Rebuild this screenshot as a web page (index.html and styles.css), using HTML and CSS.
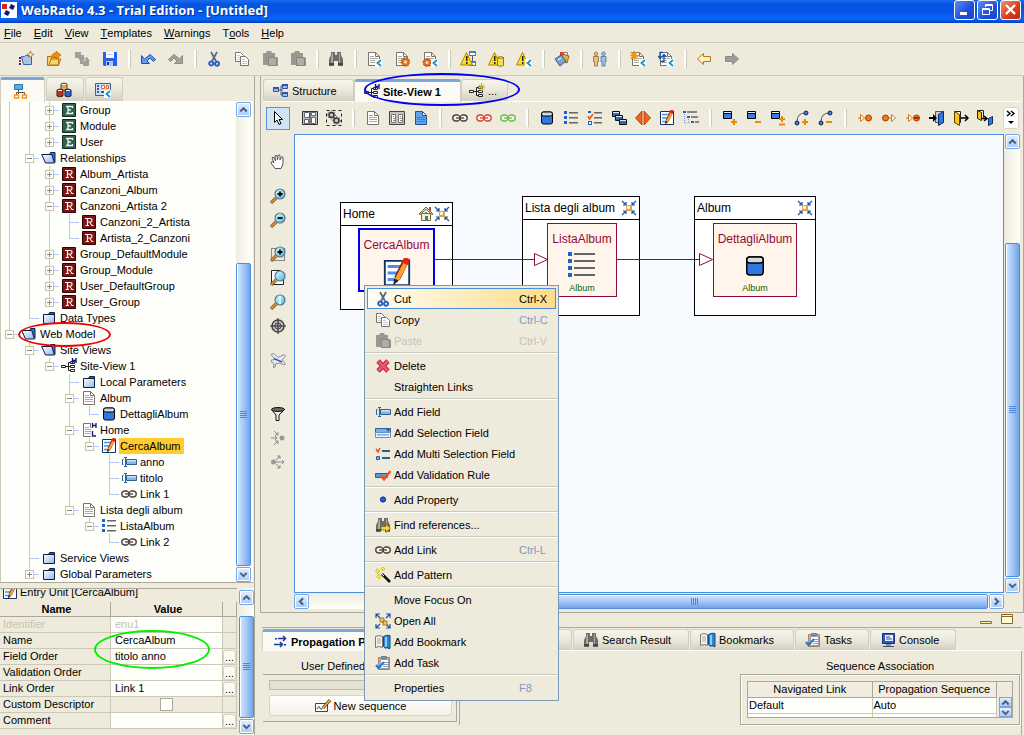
FILE: index.html
```html
<!DOCTYPE html>
<html lang="en">
<head>
<meta charset="utf-8">
<title>WebRatio 4.3 - Trial Edition - [Untitled]</title>
<link rel="stylesheet" href="styles.css">
</head>
<body>
<svg class="defs" aria-hidden="true">
  <defs>
    <linearGradient id="gf" x1="0" y1="0" x2="1" y2="1"><stop offset="0" stop-color="#fff"/><stop offset="1" stop-color="#8fb4ee"/></linearGradient>
    <linearGradient id="gl" x1="0" y1="0" x2="1" y2="1"><stop offset="0" stop-color="#e8fbff"/><stop offset="1" stop-color="#3fb4e4"/></linearGradient>
  </defs>
  <symbol id="logo" viewBox="0 0 16 16"><path fill="#fff" d="M0 0h16v16H0z"/><path fill="#e01c1c" d="M1 2h5v5H1z"/><path fill="#0d1a5c" d="M10 2l4 2-2 4-4-2zM5 8l4 2-2 4-4-2z"/></symbol>
  <symbol id="project" viewBox="0 0 16 16"><path fill="#a9c4e6" stroke="#3b659c" d="M3.500 5.500h3l1-1h3v1h3v8h-8z"/><path fill="#1b2f86" d="M1 6h2v2H1zM1 12h2v2H1z"/><path fill="#d22" d="M1 9h2v2H1z"/><path fill="#fff6c0" stroke="#b8862b" d="M12.500 0l1 2.500L16 3.500l-2.500 1-1 2.500-1-2.500L9 3.500l2.500-1z"/></symbol>
  <symbol id="open" viewBox="0 0 16 16"><path fill="#f7d56b" stroke="#b07a12" d="M1.500 14.500v-9h4l1 1h6v8zM3 14l2-6h10l-2.500 6z"/><path fill="#f08a12" stroke="#c25c00" stroke-width=".6" d="M5 8c0-4 2-6 5-6V0l5 4-5 4V6C8 6 6 6 5 8z"/></symbol>
  <symbol id="reload" viewBox="0 0 16 16"><path fill="#a09f9a" d="M1 1h6v3h3v3h2l-4 5-4-5H3V7H1zM15 15H9v-2H6v-3l3 1 3-2V6h1l3 4h-1z"/></symbol>
  <symbol id="save" viewBox="0 0 16 16"><path fill="#2460f4" d="M1 1h14v14H2l-1-1z"/><path fill="#fff" d="M4 1h8v6H4z"/><path fill="#b9c6ea" d="M5 3h6v1H5zM4 10h7v5H4z"/><path fill="#123aa0" d="M5 11h2v3H5z"/></symbol>
  <symbol id="undo" viewBox="0 0 16 16"><path fill="#5e9cf5" stroke="#1f4fb0" d="M1.500 4.500v8h8L7 10l3-3 3.500 3.500 2-2L10 3.500 4.500 8z"/></symbol>
  <symbol id="redo" viewBox="0 0 16 16"><path fill="#a4a39b" stroke="#8b8a84" d="M14.500 4.500v8h-8L9 10 6 7l-3.500 3.500-2-2L6 3.500 11.500 8z"/></symbol>
  <symbol id="cut" viewBox="0 0 16 16"><path fill="none" stroke="#5a6a86" stroke-width="1.800" d="M5 1l5 9M11 1L6 10"/><path fill="none" stroke="#2a62c4" stroke-width="2" d="M3.500 11.500a2 2 0 1 1 3 2.500 2 2 0 0 1-3-2.500zM9.500 11.500a2 2 0 1 1 0 2.500 2 2 0 0 1 0-2.500z"/></symbol>
  <symbol id="copy" viewBox="0 0 16 16"><path fill="#fff" stroke="#77736c" d="M1.500 1.500h5l3 3v6h-8z"/><path fill="none" stroke="#ccc" d="M3 4.500h3M3 6.500h3M3 8.500h3"/><path fill="#fff" stroke="#77736c" d="M6.500 5.500h5l3 3v6h-8z"/><path fill="none" stroke="#ccc" d="M8 8.500h3M8 10.500h5M8 12.500h5"/></symbol>
  <symbol id="paste" viewBox="0 0 16 16"><path fill="#989791" d="M1 2h3l1-2h4l1 2h3v4h2l1 1v8H6v-1H1z"/><path fill="#aeada6" stroke="#85847f" d="M6.500 6.500h6l2 2v6h-8z"/></symbol>
  <symbol id="binoc" viewBox="0 0 16 16"><path fill="#6c6c69" d="M3 1h4v3h2V1h4v3l2 4v7h-5v-5H6v5H1V8l2-4z"/><path fill="#aaa9a5" d="M4 2h1v10H3V8zM11 2h1v10h-1z"/><path fill="#444" d="M1 12h5v2H1zM10 12h5v2h-5z"/></symbol>
  <symbol id="page" viewBox="0 0 16 16"><path fill="#fff" stroke="#77746e" d="M2.500 1.500h7l4 4v9h-11z"/><path fill="none" stroke="#77746e" d="M9.500 1.500v4h4"/><path fill="none" stroke="#aaa7a0" d="M4 5.500h4M4 7.500h8M4 9.500h8M4 11.500h8"/></symbol>
  <symbol id="arrow-l" viewBox="0 0 16 16"><path fill="#fff" d="M9 8h7v8H9z"/><path fill="none" stroke="#1994c8" stroke-width="1.800" d="M15 9l-3.500 3 3.500 3"/></symbol>
  <symbol id="pg-arrow" viewBox="0 0 16 16"><use href="#page"/><use href="#arrow-l"/></symbol>
  <symbol id="pg-gear" viewBox="0 0 16 16"><use href="#page"/><circle cx="11.500" cy="11" r="3" fill="#f8d9b0" stroke="#e06a1a" stroke-width="2.400"/><circle cx="11.500" cy="11" r="4.400" fill="none" stroke="#9b4a12" stroke-dasharray="1.500 1.500"/></symbol>
  <symbol id="pg-gear2" viewBox="0 0 16 16"><use href="#page"/><circle cx="5" cy="11.500" r="2.800" fill="#f8d9b0" stroke="#e06a1a" stroke-width="2.400"/><circle cx="5" cy="11.500" r="4" fill="none" stroke="#9b4a12" stroke-dasharray="1.500 1.500"/><use href="#arrow-l"/></symbol>
  <symbol id="tri" viewBox="0 0 16 16"><path fill="#ffdc1e" stroke="#b08500" d="M6.500 1.500l6 12.500h-12z"/><path fill="#222" d="M6 5h1.500v5H6zM6 11h1.500v2H6z"/></symbol>
  <symbol id="warn1" viewBox="0 0 16 16"><path fill="#4c7fb8" d="M9 0h7v5H9zM9 10h7v5H9z"/><path fill="#fff" d="M10 2h5v2h-5zM10 12h5v2h-5z"/><path stroke="#555" d="M12.500 5v5"/><use href="#tri"/></symbol>
  <symbol id="warn2" viewBox="0 0 16 16"><use href="#tri"/><path fill="#f2e15a" stroke="#8d7a00" d="M9.500 6.500q3-2 6 0v8q-3 1.500-6 0zM9.500 6.500q3 2 6 0"/></symbol>
  <symbol id="warn3" viewBox="0 0 16 16"><use href="#tri"/><use href="#arrow-l"/></symbol>
  <symbol id="docs" viewBox="0 0 16 16"><path fill="#fff" stroke="#888" d="M7.500 1.500h6v9h-6z"/><path fill="#e33" d="M6 1h4v3H6z"/><path fill="#e7b13d" stroke="#9a6a10" d="M9 3l6 2-2 7-6-2z"/><path fill="#7fa3d0" stroke="#34578c" d="M1 8l6-4 5 6-6 5z"/><path stroke="#fff" d="M4 9l3-2"/></symbol>
  <symbol id="people" viewBox="0 0 16 16"><path fill="#e4c286" stroke="#8d6e39" stroke-width=".8" d="M4 1a1.800 1.800 0 1 1 0 3.600A1.800 1.800 0 0 1 4 1zM1.500 5.500h5v5h-1V15h-3v-4.500h-1z"/><path fill="#9fc0ea" stroke="#4c6c9c" stroke-width=".8" d="M11.500 1a1.800 1.800 0 1 1 0 3.600 1.800 1.800 0 0 1 0-3.600zM9 5.500h5v5h-1V15h-3v-4.500H9z"/></symbol>
  <symbol id="pg-new" viewBox="0 0 16 16"><use href="#page"/><path stroke="#f09a10" stroke-width="1.500" d="M4 0v9M0 4.500h9M1 1l6 7M7 1L1 8"/><use href="#arrow-l"/></symbol>
  <symbol id="pg-sync" viewBox="0 0 16 16"><use href="#page"/><path fill="none" stroke="#1c4cb0" stroke-width="1.300" d="M5 1.500h-3V7M0 5l2 2.500L4.500 5M2 10.500h4V4M4 6l2-2.500L8.500 6"/><use href="#arrow-l"/></symbol>
  <symbol id="back" viewBox="0 0 16 16"><path fill="#fff0b8" stroke="#b07a20" d="M1.500 8l6-5.500v3h7v5h-7v3z"/></symbol>
  <symbol id="fwd" viewBox="0 0 16 16"><path fill="#9c9c9c" stroke="#8a8a8a" d="M14.500 8l-6-5.500v3h-7v5h7v3z"/></symbol>
  <symbol id="t-tree" viewBox="0 0 16 16"><path fill="#51b0e6" stroke="#2b78ad" d="M1.500 1.500h8v5h-8z"/><path fill="none" stroke="#555" d="M5.500 7v4M3.500 12v-2.500h8V12"/><path fill="#fff" stroke="#f09a1a" stroke-width="1.400" d="M1.500 12h4v3h-4zM9.500 12h4v3h-4z"/></symbol>
  <symbol id="t-db" viewBox="0 0 16 16"><path fill="#e9a53c" stroke="#543" d="M5 2q3-2 6 0v6q-3 1.500-6 0z"/><path fill="#d22818" stroke="#421" d="M1 8q3-2 6 0v6q-3 1.500-6 0z"/><path fill="#2c62c8" stroke="#124" d="M9 8q3-2 6 0v6q-3 1.500-6 0z"/><path fill="none" stroke="#fff" d="M6 2.500h4M2 8.500h4M10 8.500h4"/></symbol>
  <symbol id="t-grid" viewBox="0 0 16 16"><path fill="#cfe0f5" stroke="#3a5f9a" d="M.5 1.500h15v12H.5z"/><path fill="#3a5f9a" d="M2 3h2v2H2zM2 6h2v2H2zM2 9h2v2H2z"/><path fill="#fff" stroke="#e06820" d="M6.500 3.500h3v3h-3zM11.500 3.500h2v3h-2z"/><path fill="#3a5f9a" d="M6 9h4v2H6z"/><use href="#arrow-l"/></symbol>
  <symbol id="struct" viewBox="0 0 16 16"><path fill="none" stroke="#555" d="M5 7h5M8 3v9h3M8 3h3"/><path fill="#9dbdf0" stroke="#2c56a8" d="M.5 4.500h5v4h-5zM9.500 1.500h5v4h-5zM9.500 9.500h5v4h-5z"/><path fill="#2c56a8" d="M0 4h6v2H0zM9 1h6v2H9zM9 9h6v2H9z"/></symbol>
  <symbol id="sv" viewBox="0 0 16 16"><path fill="none" stroke="#222" d="M4 8.500h3M10 4.500H7.500v8H10M7.500 8.500H10"/><path fill="#fff" stroke="#222" d="M.5 7.500h4v2h-4zM9.500 3.500h4v2h-4zM9.500 7.500h4v2h-4zM9.500 11.500h4v2h-4z"/></symbol>
  <symbol id="svh" viewBox="0 0 16 16"><use href="#sv"/><path fill="none" stroke="#15157c" stroke-width="1.400" d="M11.500 0v5M15 0v5M11 2.500h4"/></symbol>
  <symbol id="svn" viewBox="0 0 16 16"><use href="#sv"/><path stroke="#c5b400" d="M12.500 0v8M9 4h7M10 1.500l5 5M15 1.500l-5 5"/></symbol>
  <symbol id="pointer" viewBox="0 0 16 16"><path fill="#fff" stroke="#000" d="M4.500 1.500v11l2.500-2.500 2 4.500 2-1-2-4h3.500z"/></symbol>
  <symbol id="pages2" viewBox="0 0 16 16"><path fill="#c3c4be" stroke="#444" d="M.5 1.500h15v13H.5z"/><path fill="#fff" stroke="#777" d="M2.500 4.500h4v8h-4zM9.500 4.500h4v8h-4z"/><path stroke="#888" d="M4 6.500h1M4 8.500h2M4 10.500h2M11 6.500h1M11 8.500h2M11 10.500h2"/></symbol>
  <symbol id="area" viewBox="0 0 16 16"><path fill="#b9c4c4" stroke="#333" d="M.5 1.500h15v13H.5z"/><path fill="#fff" stroke="#667" d="M2.500 2.500h4l1 1v4h-5zM9.500 7.500h4v6h-4zM2.500 9.500h4v4h-4zM9.500 2.500h4v3h-4z"/><path stroke="#333" d="M8 1v13"/></symbol>
  <symbol id="gears" viewBox="0 0 16 16"><path fill="none" stroke="#222" stroke-dasharray="3 3" d="M.5.5h15v15H.5z"/><circle cx="5.500" cy="5" r="2.500" fill="#ccc" stroke="#333" stroke-width="1.500"/><circle cx="10.500" cy="10.500" r="2.500" fill="#ccc" stroke="#333" stroke-width="1.500"/><circle cx="10.500" cy="10.500" r="4" fill="none" stroke="#333" stroke-dasharray="1 2"/><circle cx="5.500" cy="5" r="4" fill="none" stroke="#333" stroke-dasharray="1 2"/></symbol>
  <symbol id="pgblue" viewBox="0 0 16 16"><path fill="#62a3ea" stroke="#22539a" d="M2.500 1.500h7l4 4v9h-11z"/><path fill="#fff" stroke="#22539a" d="M9.500 1.500v4h4z"/><path stroke="#3f7fce" d="M4 7.500h8M4 9.500h8M4 11.500h8"/></symbol>
  <symbol id="chain" viewBox="0 0 16 16"><path fill="#fff" fill-opacity=".5" stroke="currentColor" stroke-width="1.300" d="M3.500 5h2.500q2 1 2 3t-2 3H3.500Q.7 10.500.7 8t2.800-3zM10 5h2.500q2.800.5 2.800 3t-2.800 3H10q-2-1-2-3t2-3z"/><path stroke="currentColor" stroke-width="1.300" d="M4 8h8"/></symbol>
  <symbol id="cyl" viewBox="0 0 16 16"><path fill="#2f78e0" stroke="#000" d="M2.500 4q0-2 2-2h7q2 0 2 2v8q0 2-2 2h-7q-2 0-2-2z"/><path fill="#d6d9dc" stroke="#000" d="M2.500 4q0-2 2-2h7q2 0 2 2 0 2-2 2h-7q-2 0-2-2z"/></symbol>
  <symbol id="list" viewBox="0 0 16 16"><path fill="#1e62cc" d="M1 1h3v3H1zM1 6h3v3H1zM1 11h3v3H1z"/><path fill="#666" d="M6 2h9v1.500H6zM6 7h9v1.500H6zM6 12h9v1.500H6z"/></symbol>
  <symbol id="list4" viewBox="0 0 28 26"><path fill="#1e62cc" d="M0 0h4v4H0zM0 7h4v4H0zM0 14h4v4H0zM0 21h4v4H0z"/><path fill="#666" d="M6 1h21v2H6zM6 8h21v2H6zM6 15h21v2H6zM6 22h21v2H6z"/></symbol>
  <symbol id="mlist" viewBox="0 0 16 16"><path fill="#1e62cc" d="M1 1h3v2H1zM1 11h4v4H1z"/><path fill="#fff" d="M2 12h2v2H2z"/><path fill="none" stroke="#f05010" stroke-width="1.500" d="M1 6l1.500 3L6 4"/><path fill="#666" d="M7 2h8v1.500H7zM7 7h8v1.500H7zM7 12h8v1.500H7z"/></symbol>
  <symbol id="multi" viewBox="0 0 16 16"><path fill="#2f6cc4" stroke="#111" d="M1.500 1.500h7v5h-7zM4.500 5.500h7v5h-7zM8.500 9.500h7v5h-7z"/><path fill="#dfe8f5" d="M2 2h6v1H2zM5 6h6v1H5zM9 10h6v1H9z"/></symbol>
  <symbol id="scroll" viewBox="0 0 16 16"><path fill="#f0641c" stroke="#a03a08" stroke-width=".8" d="M7 1v14L.5 8zM9 1v14l6.500-7z"/></symbol>
  <symbol id="entry" viewBox="0 0 16 16"><path fill="#fff" stroke="#16335c" d="M1.500 1.500h13v13h-13z"/><path stroke="#4b8fe6" stroke-width="1.600" d="M3 4.500h7M3 8h7M3 11.500h5"/><path stroke="#6b3010" stroke-width="3.400" d="M12.500 2L8 11"/><path stroke="#ff9d2e" stroke-width="2.400" d="M12.500 3L8 11.500"/><path stroke="#f21b0c" stroke-width="3.200" d="M13.500 0L12 3"/><path fill="#222" d="M6.500 11l2.500 1-3 2.500z"/></symbol>
  <symbol id="hier" viewBox="0 0 16 16"><path fill="#1e62cc" d="M0 1h3v2H0zM4 6h3v2H4zM8 11h3v2H8z"/><path stroke="#666" stroke-width="1.500" d="M4 2h10M8 7h7M12 12h4"/><path fill="none" stroke="#6c93d8" stroke-dasharray="1 1" d="M1.500 4v9h2M5.500 9v4h2"/></symbol>
  <symbol id="cylS" viewBox="0 0 16 16"><path fill="#3a80e4" stroke="#000" d="M1.500 2.500h8v6h-8z"/><path fill="#f2f2f2" stroke="#000" d="M1.500 1.500h8v2h-8z"/></symbol>
  <symbol id="c-add" viewBox="0 0 16 16"><use href="#cylS"/><path stroke="#e68a10" stroke-width="2" d="M9 12h6M12 9v6"/></symbol>
  <symbol id="c-del" viewBox="0 0 16 16"><use href="#cylS"/><path stroke="#e68a10" stroke-width="2" d="M9 12h6"/></symbol>
  <symbol id="c-mod" viewBox="0 0 16 16"><use href="#cylS"/><path stroke="#e68a10" stroke-width="2" d="M9 9h6M12 6v6M9 14.500h6"/></symbol>
  <symbol id="arc" viewBox="0 0 16 16"><path fill="none" stroke="#555" d="M3 12Q3 3 11 3"/><circle cx="3" cy="13" r="2" fill="#3a80e4" stroke="#124"/><circle cx="12" cy="3" r="2" fill="#3a80e4" stroke="#124"/></symbol>
  <symbol id="r-add" viewBox="0 0 16 16"><use href="#arc"/><path stroke="#e68a10" stroke-width="2" d="M8 12h6M11 9v6"/></symbol>
  <symbol id="r-del" viewBox="0 0 16 16"><use href="#arc"/><path stroke="#e68a10" stroke-width="2" d="M8 12h6"/></symbol>
  <symbol id="ev1" viewBox="0 0 16 16"><path fill="#fff" stroke="#c8821c" d="M1 8h2M3.500 4.500v7L7.500 8z"/><circle cx="11.500" cy="8" r="3" fill="#f47a10" stroke="#a33c00"/></symbol>
  <symbol id="ev2" viewBox="0 0 16 16"><path fill="#fff" stroke="#c8821c" d="M7 8h4M10.500 4.500v7L14.500 8z"/><circle cx="4.500" cy="8" r="3" fill="#f47a10" stroke="#a33c00"/></symbol>
  <symbol id="ev3" viewBox="0 0 16 16"><use href="#ev1"/><path stroke="#700" stroke-width="1.400" d="M9.500 8h4"/></symbol>
  <symbol id="in" viewBox="0 0 16 16"><path fill="#ccc" stroke="#555" d="M6.500 1.500h8v11h-8z"/><path fill="#2f78e0" stroke="#0c2c66" d="M9.500 4.500l5-3v11l-5 3z"/><path fill="#000" d="M0 7h4V4l4 4-4 4V9H0z"/></symbol>
  <symbol id="out" viewBox="0 0 16 16"><path fill="#fff" stroke="#222" d="M1.500 1.500h6v11h-6z"/><path fill="#ffc414" stroke="#5b4200" d="M1.500 1.500l5 3v11l-5-3z"/><path fill="none" stroke="#000" stroke-width="1.500" d="M8 8h7M12 5l3 3-3 3"/></symbol>
  <symbol id="inout" viewBox="0 0 16 16"><path fill="#ffc414" stroke="#222" d="M.5.500l4 2v8l-4-2z"/><path fill="none" stroke="#222" d="M.5.500h6v7"/><path fill="#2f78e0" stroke="#0c2c66" d="M11.500 8.500l4-2v7l-4 2z"/><path fill="none" stroke="#000" stroke-width="1.500" d="M5 8.500h4M7 6l3 2.500L7 11"/></symbol>
  <symbol id="hand" viewBox="0 0 16 16"><path fill="#fff" stroke="#555" d="M5 14.500L1 9q0-2 2-1l1 1-2-5q1-2 2 0l1.500 3L5 2q1-2 2 0l.5 4L8 1.500q1-1.500 2 0L10 6l1.500-3q1.500-1 1.500 1v6l-2 4.500z"/></symbol>
  <symbol id="lens" viewBox="0 0 16 16"><path stroke="#8a5312" stroke-width="3.200" d="M1 15l5-5"/><path stroke="#e0983a" stroke-width="1.600" d="M1 15l5-5"/><circle cx="10" cy="6" r="5" fill="url(#gl)" stroke="#56778c" stroke-width="1.200"/></symbol>
  <symbol id="zin" viewBox="0 0 16 16"><use href="#lens"/><path stroke="#000" stroke-width="1.800" d="M7.500 6h5M10 3.500v5"/></symbol>
  <symbol id="zout" viewBox="0 0 16 16"><use href="#lens"/><path stroke="#000" stroke-width="1.800" d="M7.500 6h5"/></symbol>
  <symbol id="zsel" viewBox="0 0 16 16"><path fill="none" stroke="#222" stroke-dasharray="1 1" d="M1.500 2.500h13v12h-13z"/><use href="#zin"/></symbol>
  <symbol id="zpage" viewBox="0 0 16 16"><path fill="#fff" stroke="#222" d="M1.500.5h9l3 3v11h-12z"/><use href="#lens"/></symbol>
  <symbol id="zone" viewBox="0 0 16 16"><use href="#lens"/><path stroke="#fff" stroke-width="1.500" d="M10 2v8"/></symbol>
  <symbol id="target" viewBox="0 0 16 16"><circle cx="8" cy="8" r="6" fill="#ccc" stroke="#444" stroke-width="1.600"/><circle cx="8" cy="8" r="3.200" fill="#aaa" stroke="#444"/><path stroke="#333" d="M8 0v16M0 8h16"/></symbol>
  <symbol id="plane" viewBox="0 0 16 16"><path fill="#eceef2" stroke="#8a8a90" d="M1 2.500l3-1 4 4 6-3 1.500 1.500-3.500 4 3.500 4-1.500 1-4-2-4 .5-1 3.500-1.500.5.500-4-3-2 .5-1.500 4-.5z"/><path stroke="#2f5fd0" stroke-width="1.600" d="M4 6.500l8 3.500"/></symbol>
  <symbol id="funnel" viewBox="0 0 16 16"><path fill="#eee" stroke="#111" d="M1.500 3.500L6 9v5.500h3V9l5.500-5.500z"/><ellipse cx="8" cy="3.500" rx="6.500" ry="2" fill="#666" stroke="#111"/></symbol>
  <symbol id="conv" viewBox="0 0 16 16"><circle cx="12" cy="8" r="2.500" fill="#999"/><path fill="none" stroke="#888" d="M1 8h6M5 6l2 2-2 2M4 1l4 4M8 2v3H5M4 15l4-4M8 14v-3H5"/></symbol>
  <symbol id="div" viewBox="0 0 16 16"><circle cx="3.500" cy="8" r="2.500" fill="#999"/><path fill="none" stroke="#888" d="M6 8h8M12 6l2 2-2 2M6 6l4-4M7 2h3v3M6 10l4 4M7 14h3v-3"/></symbol>
  <symbol id="folder" viewBox="0 0 16 16"><path fill="#2c62b4" stroke="#0c2350" d="M7.500 4.500l1-2h5v3"/><path fill="url(#gf)" stroke="#0c1d40" d="M2.500 4.500h11v9h-11z"/></symbol>
  <symbol id="folderO" viewBox="0 0 16 16"><path fill="#2c72d4" stroke="#0c2350" d="M6.500 4.500h2l1-2h4.500v10"/><path fill="url(#gf)" stroke="#0c1d40" d="M.7 4.500h10l2.800 8.500h-9z"/></symbol>
  <symbol id="pagehl" viewBox="0 0 16 16"><use href="#page"/><path fill="#fdfdfa" d="M10 0h6v16h-6z"/><path fill="none" stroke="#15157c" stroke-width="1.300" d="M11.500 1v5M15 1v5M11 3.500h4M11.500 9v5H15"/></symbol>
  <symbol id="field" viewBox="0 0 16 16"><path fill="#86b5e6" stroke="#2c6098" d="M5.500 5.500h10v5h-10z"/><path fill="#cfe3f8" d="M6 6h9v1.500H6z"/><path fill="none" stroke="#2c6098" d="M4.500 4v8M3 3.500h3M3 12.500h3M2.500 5.500h-1v5h1"/></symbol>
  <symbol id="select" viewBox="0 0 16 16"><path fill="#7eaee4" stroke="#2c6098" d="M.5 3.500h15v4H.5z"/><path fill="#e8f2fc" stroke="#5f93cc" d="M.5 7.500h15v5H.5z"/><path fill="#2c6098" d="M11 4h4L13 7z"/><path fill="#7eaee4" d="M2 9h12v1.500H2z"/></symbol>
  <symbol id="mfield" viewBox="0 0 16 16"><path fill="none" stroke="#f04a10" stroke-width="1.500" d="M1 3l2 3 2-4"/><path fill="#7eaee4" stroke="#2c6098" d="M7 4.500h8M7 5.500h8M7 11.500h8M7 12.500h8M1.500 10.500h3v3h-3z"/></symbol>
  <symbol id="valid" viewBox="0 0 16 16"><path fill="#5f98d8" stroke="#2c6098" d="M.5 6.500h12v4H.5z"/><path fill="none" stroke="#f5500c" stroke-width="2.200" d="M6 9l3 3.500L15.500 4"/></symbol>
  <symbol id="dot" viewBox="0 0 16 16"><circle cx="8" cy="7.500" r="2.600" fill="#1c5ff0" stroke="#0a2280"/></symbol>
  <symbol id="find" viewBox="0 0 16 16"><use href="#binoc"/><path fill="#ffd23e" stroke="#8a6400" stroke-width=".8" d="M6 9.500h5V7l4.500 4.200L11 15.500V13H6z"/></symbol>
  <symbol id="wand" viewBox="0 0 16 16"><path stroke="#111" stroke-width="2.600" d="M7 7l8 8"/><path stroke="#fff" d="M7 7l2 2"/><path fill="#ffec1c" stroke="#c2a800" stroke-width=".6" d="M2.500 1.500l2 2.500-2 2.500-2-2.500zM8 0l2 2-2 2-2-2zM4 7l2 2.500L4 12 2 9.500z"/></symbol>
  <symbol id="expand" viewBox="0 0 16 16"><path fill="none" stroke="#1f4fb0" stroke-width="1.200" d="M1 5V1h4M11 1h4v4M15 11v4h-4M5 15H1v-4M1 1l4 4M15 1l-4 4M15 15l-4-4M1 15l4-4"/><path fill="#f0c35c" stroke="#8a6a20" stroke-width=".8" d="M5 5h4v4H5zM8 8h4v4H8z"/></symbol>
  <symbol id="shrink" viewBox="0 0 16 16"><path fill="none" stroke="#1f4fb0" stroke-width="1.200" d="M1 1l4 4M2 5h3V2M15 1l-4 4M11 2v3h3M1 15l4-4M2 11h3v3M15 15l-4-4M14 11h-3v3"/><path fill="#d9a840" d="M5 5h6v6H5z"/><path fill="#fff3c0" d="M6 6h3v3H6z"/></symbol>
  <symbol id="home" viewBox="0 0 16 16"><path fill="#fbf2c4" stroke="#7b6a3a" d="M3.500 7.500h9v7h-9z"/><path fill="#d8dcc0" stroke="#6b6b4b" d="M1 8l7-7 7 7-1 .5-6-5-6 5z"/><path fill="#b44" d="M11 1h2v4h-2z"/><path fill="#3c77b8" d="M7 10h3v5H7z"/><path fill="#3c9a4a" d="M7 6h2v2H7z"/></symbol>
  <symbol id="book" viewBox="0 0 16 16"><path fill="#f6f2e4" stroke="#777" d="M.5 2.500Q4 .5 7.500 2.500v11Q4 11.500.5 13.500z"/><path stroke="#aaa" d="M2 5h4M2 7h4M2 9h4"/><path fill="#2c86d8" stroke="#0d4a8a" d="M8.500 2.500q3-2 6.500-1v13h-2l-1-2-1 2-2.500-2z"/><path fill="#8ecbf8" d="M10 3h2v10h-2z"/></symbol>
  <symbol id="task" viewBox="0 0 16 16"><path fill="#d7b088" stroke="#a9825a" d="M3.500 2.500h11v12h-11z"/><path fill="#fff" stroke="#99a" d="M5.500 4.500h8v9h-8z"/><path fill="#7fa6d6" stroke="#678" d="M6.500 1.500h5v2h-5z"/><path stroke="#99a" d="M9 7.500h4M8 9.500h5M8 11.500h5"/><path fill="none" stroke="#1b7fd8" stroke-width="2.200" d="M1 10l2.500 3L9 7"/></symbol>
  <symbol id="console" viewBox="0 0 16 16"><path fill="#3458c0" stroke="#1b2c78" d="M2.500 1.500h12v10h-12z"/><path fill="#e8eefc" d="M5 3h8v6H5z"/><path stroke="#456" d="M6 5h4M6 7h6M3 14.500h11"/><path fill="#7c8fc0" d="M6 12h5v2H6z"/></symbol>
  <symbol id="prop" viewBox="0 0 16 16"><path fill="none" stroke="#1c3c9c" stroke-width="1.500" d="M6 4.500h7M11 2l2.500 2.500L11 7M2 10.500h8M8 8l2.500 2.500L8 13"/><path fill="#1c3c9c" d="M3 4h2v1.500H3zM12 10h2v1.500h-2z"/></symbol>
  <symbol id="del" viewBox="0 0 16 16"><path stroke="#b81c38" stroke-width="4.600" d="M3 3l10 10M13 3L3 13"/><path stroke="#f0546c" stroke-width="3" d="M3 3l10 10M13 3L3 13"/></symbol>
  <symbol id="e" viewBox="0 0 16 16"><path fill="#356250" stroke="#0e2a20" d="M1.500 1.500h13v13h-13z"/><path fill="none" stroke="#e8f4ee" stroke-width="1.300" d="M5 4.500h6.500V6M7 4v8M5 11.500h6.500V10M7 8h3"/></symbol>
  <symbol id="r" viewBox="0 0 16 16"><path fill="#7c1414" stroke="#2a0404" d="M1.500 1.500h13v13h-13z"/><path fill="none" stroke="#fff0f0" stroke-width="1.200" d="M4 4.500h5q2 0 2 1.800t-2 1.700H6.500M6.500 4v8M4.500 11.500h3.500M8.500 8l2.500 3.500h1.500"/></symbol>
  <symbol id="up" viewBox="0 0 16 16"><path fill="none" stroke="#4d6185" stroke-width="2.600" d="M4 10.500l4-4 4 4"/></symbol>
  <symbol id="down" viewBox="0 0 16 16"><path fill="none" stroke="#4d6185" stroke-width="2.600" d="M4 6l4 4 4-4"/></symbol>
  <symbol id="left" viewBox="0 0 16 16"><path fill="none" stroke="#4d6185" stroke-width="2.600" d="M10 4L6 8l4 4"/></symbol>
  <symbol id="right" viewBox="0 0 16 16"><path fill="none" stroke="#4d6185" stroke-width="2.600" d="M6 4l4 4-4 4"/></symbol>
  <symbol id="wmin" viewBox="0 0 20 20"><path fill="#fff" d="M5 12h7v3H5z"/></symbol>
  <symbol id="wres" viewBox="0 0 20 20"><path fill="none" stroke="#fff" d="M7.500 7V4.500h7v6H12M7 5.500h8M4.500 8.500h7v6h-7zM4 9.500h8"/></symbol>
  <symbol id="wclose" viewBox="0 0 20 20"><path stroke="#fff" stroke-width="2.400" d="M5 5l9 9M14 5l-9 9"/></symbol>
  <symbol id="more" viewBox="0 0 16 24"><path fill="none" stroke="#000" stroke-width="1.400" d="M4 5l3 2.500L4 10M8 5l3 2.500L8 10"/><path fill="#000" d="M5 15h6l-3 3z"/></symbol>
  <symbol id="pmin" viewBox="0 0 14 12"><path fill="#fff3b0" stroke="#8a6a20" d="M1.500 8.500h11v2h-11z"/></symbol>
  <symbol id="pmax" viewBox="0 0 14 12"><path fill="#fffad8" stroke="#8a6a20" d="M1.500 1.500h11v9h-11zM1 3.500h12"/></symbol>
  <symbol id="seq" viewBox="0 0 16 16"><path fill="#fff" stroke="#444" d="M.5 5.500h12v8H.5z"/><path fill="none" stroke="#333" d="M2 11q2-4 3-1t3-1"/><path stroke="#5b3b10" stroke-width="3" d="M15 2l-7 8"/><path stroke="#f2b848" stroke-width="1.500" d="M15 2l-7 8"/></symbol>
</svg>

<header class="titlebar">
  <svg class="ic"><use href="#logo"/></svg>
  <h1>WebRatio 4.3 - Trial Edition - [Untitled]</h1>
  <div class="winbtns">
    <button aria-label="Minimize"><svg><use href="#wmin"/></svg></button>
    <button aria-label="Restore"><svg><use href="#wres"/></svg></button>
    <button class="close" aria-label="Close"><svg><use href="#wclose"/></svg></button>
  </div>
</header>

<nav class="menubar">
  <button><u>F</u>ile</button><button><u>E</u>dit</button><button><u>V</u>iew</button><button><u>T</u>emplates</button><button><u>W</u>arnings</button><button>T<u>o</u>ols</button><button><u>H</u>elp</button>
</nav>

<div class="toolbar main-tools">
  <button aria-label="New"><svg class="ic"><use href="#project"/></svg></button>
  <button aria-label="Open"><svg class="ic"><use href="#open"/></svg></button>
  <button aria-label="Reload"><svg class="ic"><use href="#reload"/></svg></button>
  <button aria-label="Save"><svg class="ic"><use href="#save"/></svg></button>
  <i class="sep"></i>
  <button aria-label="Undo"><svg class="ic"><use href="#undo"/></svg></button>
  <button aria-label="Redo"><svg class="ic"><use href="#redo"/></svg></button>
  <i class="sep"></i>
  <button aria-label="Cut"><svg class="ic"><use href="#cut"/></svg></button>
  <button aria-label="Copy"><svg class="ic"><use href="#copy"/></svg></button>
  <button aria-label="Paste"><svg class="ic"><use href="#paste"/></svg></button>
  <button aria-label="Paste special"><svg class="ic"><use href="#paste"/></svg></button>
  <i class="sep"></i>
  <button aria-label="Find"><svg class="ic"><use href="#binoc"/></svg></button>
  <i class="sep"></i>
  <button aria-label="Generate page"><svg class="ic"><use href="#pg-arrow"/></svg></button>
  <button aria-label="Page settings"><svg class="ic"><use href="#pg-gear"/></svg></button>
  <button aria-label="Generate settings"><svg class="ic"><use href="#pg-gear2"/></svg></button>
  <i class="sep"></i>
  <button aria-label="Model warnings"><svg class="ic"><use href="#warn1"/></svg></button>
  <button aria-label="Data warnings"><svg class="ic"><use href="#warn2"/></svg></button>
  <button aria-label="Presentation warnings"><svg class="ic"><use href="#warn3"/></svg></button>
  <i class="sep"></i>
  <button aria-label="Documentation"><svg class="ic"><use href="#docs"/></svg></button>
  <i class="sep"></i>
  <button aria-label="Users"><svg class="ic"><use href="#people"/></svg></button>
  <i class="sep"></i>
  <button aria-label="New template"><svg class="ic"><use href="#pg-new"/></svg></button>
  <button aria-label="Sync template"><svg class="ic"><use href="#pg-sync"/></svg></button>
  <i class="sep"></i>
  <button aria-label="Back"><svg class="ic"><use href="#back"/></svg></button>
  <button aria-label="Forward"><svg class="ic"><use href="#fwd"/></svg></button>
</div>

<main class="work">
  <aside class="side">
    <div class="tabs side-tabs">
      <button class="tab on" aria-label="Model tree"><svg class="ic"><use href="#t-tree"/></svg></button>
      <button class="tab" aria-label="Data"><svg class="ic"><use href="#t-db"/></svg></button>
      <button class="tab" aria-label="Presentation"><svg class="ic"><use href="#t-grid"/></svg></button>
    </div>
    <section class="tree-panel">
      <ul class="tree">
        <li class="bare"><ul>
          <li class="bare"><ul>
            <li><div class="row"><button class="tog plus" aria-label="Expand"></button><svg class="ic"><use href="#e"/></svg><span>Group</span></div></li>
            <li><div class="row"><button class="tog plus" aria-label="Expand"></button><svg class="ic"><use href="#e"/></svg><span>Module</span></div></li>
            <li><div class="row"><button class="tog plus" aria-label="Expand"></button><svg class="ic"><use href="#e"/></svg><span>User</span></div></li>
          </ul></li>
          <li><div class="row"><button class="tog" aria-label="Collapse"></button><svg class="ic"><use href="#folderO"/></svg><span>Relationships</span></div>
            <ul>
              <li><div class="row"><button class="tog plus" aria-label="Expand"></button><svg class="ic"><use href="#r"/></svg><span>Album_Artista</span></div></li>
              <li><div class="row"><button class="tog plus" aria-label="Expand"></button><svg class="ic"><use href="#r"/></svg><span>Canzoni_Album</span></div></li>
              <li><div class="row"><button class="tog" aria-label="Collapse"></button><svg class="ic"><use href="#r"/></svg><span>Canzoni_Artista 2</span></div>
                <ul>
                  <li><div class="row leaf"><svg class="ic"><use href="#r"/></svg><span>Canzoni_2_Artista</span></div></li>
                  <li><div class="row leaf"><svg class="ic"><use href="#r"/></svg><span>Artista_2_Canzoni</span></div></li>
                </ul></li>
              <li><div class="row"><button class="tog plus" aria-label="Expand"></button><svg class="ic"><use href="#r"/></svg><span>Group_DefaultModule</span></div></li>
              <li><div class="row"><button class="tog plus" aria-label="Expand"></button><svg class="ic"><use href="#r"/></svg><span>Group_Module</span></div></li>
              <li><div class="row"><button class="tog plus" aria-label="Expand"></button><svg class="ic"><use href="#r"/></svg><span>User_DefaultGroup</span></div></li>
              <li><div class="row"><button class="tog plus" aria-label="Expand"></button><svg class="ic"><use href="#r"/></svg><span>User_Group</span></div></li>
            </ul></li>
          <li><div class="row leaf"><svg class="ic"><use href="#folder"/></svg><span>Data Types</span></div></li>
        </ul></li>
        <li><div class="row"><button class="tog" aria-label="Collapse"></button><svg class="ic"><use href="#folderO"/></svg><span>Web Model</span></div>
          <ul>
            <li><div class="row"><button class="tog" aria-label="Collapse"></button><svg class="ic"><use href="#folderO"/></svg><span>Site Views</span></div>
              <ul>
                <li><div class="row"><button class="tog" aria-label="Collapse"></button><svg class="ic"><use href="#svh"/></svg><span>Site-View 1</span></div>
                  <ul>
                    <li><div class="row leaf"><svg class="ic"><use href="#folder"/></svg><span>Local Parameters</span></div></li>
                    <li><div class="row"><button class="tog" aria-label="Collapse"></button><svg class="ic"><use href="#page"/></svg><span>Album</span></div>
                      <ul><li><div class="row leaf"><svg class="ic"><use href="#cyl"/></svg><span>DettagliAlbum</span></div></li></ul></li>
                    <li><div class="row"><button class="tog" aria-label="Collapse"></button><svg class="ic"><use href="#pagehl"/></svg><span>Home</span></div>
                      <ul><li><div class="row"><button class="tog" aria-label="Collapse"></button><svg class="ic"><use href="#entry"/></svg><span class="picked">CercaAlbum</span></div>
                        <ul>
                          <li><div class="row leaf"><svg class="ic"><use href="#field"/></svg><span>anno</span></div></li>
                          <li><div class="row leaf"><svg class="ic"><use href="#field"/></svg><span>titolo</span></div></li>
                          <li><div class="row leaf"><svg class="ic chain"><use href="#chain"/></svg><span>Link 1</span></div></li>
                        </ul></li></ul></li>
                    <li><div class="row"><button class="tog" aria-label="Collapse"></button><svg class="ic"><use href="#page"/></svg><span>Lista degli album</span></div>
                      <ul><li><div class="row"><button class="tog" aria-label="Collapse"></button><svg class="ic"><use href="#list"/></svg><span>ListaAlbum</span></div>
                        <ul><li><div class="row leaf"><svg class="ic chain"><use href="#chain"/></svg><span>Link 2</span></div></li></ul></li></ul></li>
                  </ul></li>
              </ul></li>
            <li><div class="row leaf"><svg class="ic"><use href="#folder"/></svg><span>Service Views</span></div></li>
            <li><div class="row"><button class="tog plus" aria-label="Expand"></button><svg class="ic"><use href="#folder"/></svg><span>Global Parameters</span></div></li>
          </ul></li>
      </ul>
      <div class="sb sb-tree"><button aria-label="Scroll up"><svg><use href="#up"/></svg></button><i class="track"></i><i class="thumb"></i><button aria-label="Scroll down"><svg><use href="#down"/></svg></button></div>
    </section>

    <section class="props">
      <div class="props-body">
        <div class="props-title"><svg class="ic"><use href="#entry"/></svg><span>Entry Unit [CercaAlbum]</span></div>
        <table class="ptable">
          <thead><tr><th class="pn">Name</th><th class="pv">Value</th><th></th></tr></thead>
          <tbody>
            <tr class="off"><td>Identifier</td><td class="val">enu1</td><td></td></tr>
            <tr><td>Name</td><td class="val">CercaAlbum</td><td></td></tr>
            <tr><td>Field Order</td><td class="val">titolo anno</td><td><button class="dots">...</button></td></tr>
            <tr><td>Validation Order</td><td class="val"></td><td><button class="dots">...</button></td></tr>
            <tr><td>Link Order</td><td class="val">Link 1</td><td><button class="dots">...</button></td></tr>
            <tr><td><label for="cd">Custom Descriptor</label></td><td class="chk"><input type="checkbox" id="cd"></td><td></td></tr>
            <tr><td>Comment</td><td class="val"></td><td><button class="dots">...</button></td></tr>
          </tbody>
        </table>
      </div>
      <div class="sb sb-props"><button aria-label="Scroll up"><svg><use href="#up"/></svg></button><i class="track"></i><i class="thumb"></i><button aria-label="Scroll down"><svg><use href="#down"/></svg></button></div>
    </section>
  </aside>

  <div class="editor-col">
    <section class="editor">
      <div class="tabs">
        <button class="tab t-struct"><svg class="ic"><use href="#struct"/></svg>Structure</button>
        <button class="tab on t-site"><svg class="ic"><use href="#svh"/></svg>Site-View 1</button>
        <button class="tab t-new"><svg class="ic"><use href="#svn"/></svg>...</button>
      </div>
      <div class="toolbar unit-tools">
        <button class="sel" aria-label="Select"><svg class="ic"><use href="#pointer"/></svg></button>
        <i class="gap"></i>
        <button aria-label="Area"><svg class="ic"><use href="#area"/></svg></button>
        <button aria-label="Transaction"><svg class="ic"><use href="#gears"/></svg></button>
        <i class="sep"></i>
        <button aria-label="Page"><svg class="ic"><use href="#page"/></svg></button>
        <button aria-label="Alternative"><svg class="ic"><use href="#pages2"/></svg></button>
        <button aria-label="Master page"><svg class="ic"><use href="#pgblue"/></svg></button>
        <i class="sep"></i>
        <button class="chain" aria-label="Link"><svg class="ic"><use href="#chain"/></svg></button>
        <button class="chain ko" aria-label="KO link"><svg class="ic"><use href="#chain"/></svg></button>
        <button class="chain ok" aria-label="OK link"><svg class="ic"><use href="#chain"/></svg></button>
        <i class="sep"></i>
        <button aria-label="Data unit"><svg class="ic"><use href="#cyl"/></svg></button>
        <button aria-label="Index unit"><svg class="ic"><use href="#list"/></svg></button>
        <button aria-label="Multichoice unit"><svg class="ic"><use href="#mlist"/></svg></button>
        <button aria-label="Multidata unit"><svg class="ic"><use href="#multi"/></svg></button>
        <button aria-label="Scroller unit"><svg class="ic"><use href="#scroll"/></svg></button>
        <button aria-label="Entry unit"><svg class="ic"><use href="#entry"/></svg></button>
        <button aria-label="Hierarchical index"><svg class="ic"><use href="#hier"/></svg></button>
        <i class="sep"></i>
        <button aria-label="Create unit"><svg class="ic"><use href="#c-add"/></svg></button>
        <button aria-label="Delete unit"><svg class="ic"><use href="#c-del"/></svg></button>
        <button aria-label="Modify unit"><svg class="ic"><use href="#c-mod"/></svg></button>
        <button aria-label="Connect unit"><svg class="ic"><use href="#r-add"/></svg></button>
        <button aria-label="Disconnect unit"><svg class="ic"><use href="#r-del"/></svg></button>
        <i class="sep"></i>
        <button aria-label="Get unit"><svg class="ic"><use href="#ev1"/></svg></button>
        <button aria-label="Set unit"><svg class="ic"><use href="#ev2"/></svg></button>
        <button aria-label="Reset unit"><svg class="ic"><use href="#ev3"/></svg></button>
        <button aria-label="Login"><svg class="ic"><use href="#in"/></svg></button>
        <button aria-label="Logout"><svg class="ic"><use href="#out"/></svg></button>
        <button aria-label="Change group"><svg class="ic"><use href="#inout"/></svg></button>
        <button class="more" aria-label="More"><svg><use href="#more"/></svg></button>
      </div>
      <div class="stage">
        <div class="vtools">
          <button aria-label="Pan"><svg class="ic"><use href="#hand"/></svg></button>
          <i class="vgap"></i>
          <button aria-label="Zoom in"><svg class="ic"><use href="#zin"/></svg></button>
          <button aria-label="Zoom out"><svg class="ic"><use href="#zout"/></svg></button>
          <i class="vgap"></i>
          <button aria-label="Zoom selection"><svg class="ic"><use href="#zsel"/></svg></button>
          <button aria-label="Zoom page"><svg class="ic"><use href="#zpage"/></svg></button>
          <button aria-label="Actual size"><svg class="ic"><use href="#zone"/></svg></button>
          <button aria-label="Center"><svg class="ic"><use href="#target"/></svg></button>
          <i class="vgap"></i>
          <button aria-label="Overview"><svg class="ic"><use href="#plane"/></svg></button>
          <i class="vgap"></i><i class="vgap"></i><i class="vgap"></i>
          <button aria-label="Filter"><svg class="ic"><use href="#funnel"/></svg></button>
          <button aria-label="Incoming links"><svg class="ic"><use href="#conv"/></svg></button>
          <button aria-label="Outgoing links"><svg class="ic"><use href="#div"/></svg></button>
        </div>
        <div class="canvas">
          <article class="node n-home"><h2><span>Home</span><svg class="ic"><use href="#home"/></svg><svg class="ic"><use href="#shrink"/></svg></h2>
            <div class="unit active"><b>CercaAlbum</b><svg class="u-entry"><use href="#entry"/></svg></div></article>
          <article class="node n-list"><h2><span>Lista degli album</span><svg class="ic"><use href="#shrink"/></svg></h2>
            <div class="unit"><b>ListaAlbum</b><svg class="u-list"><use href="#list4"/></svg><small>Album</small></div></article>
          <article class="node n-album"><h2><span>Album</span><svg class="ic"><use href="#shrink"/></svg></h2>
            <div class="unit"><b>DettagliAlbum</b><svg class="u-cyl"><use href="#cyl"/></svg><small>Album</small></div></article>
          <svg class="links" fill="none" stroke="#8f0a3c"><path d="M140 124.500h99M239.500 118.500v12l13-6zM322 124.500h82M404.500 118.500v12l13-6z"/></svg>
        </div>
        <div class="sb sb-v"><button aria-label="Scroll up"><svg><use href="#up"/></svg></button><i class="track"></i><i class="thumb"></i><button aria-label="Scroll down"><svg><use href="#down"/></svg></button></div>
        <div class="sb sb-h"><button aria-label="Scroll left"><svg><use href="#left"/></svg></button><i class="track"></i><i class="thumb"></i><button aria-label="Scroll right"><svg><use href="#right"/></svg></button></div>
      </div>
    </section>

    <section class="bottom">
      <div class="panebtns"><button aria-label="Minimize pane"><svg><use href="#pmin"/></svg></button><button aria-label="Maximize pane"><svg><use href="#pmax"/></svg></button></div>
      <div class="tabs">
        <button class="tab on t-prop"><svg class="ic"><use href="#prop"/></svg>Propagation Panel</button>
        <button class="tab t-hid" aria-label="Problems"></button>
        <button class="tab t-search"><svg class="ic"><use href="#binoc"/></svg>Search Result</button>
        <button class="tab t-book"><svg class="ic"><use href="#book"/></svg>Bookmarks</button>
        <button class="tab t-task"><svg class="ic"><use href="#task"/></svg>Tasks</button>
        <button class="tab t-cons"><svg class="ic"><use href="#console"/></svg>Console</button>
      </div>
      <div class="bottom-body">
        <div class="seqs">
          <h3>User Defined</h3>
          <div class="seqbox"><div class="seqlist"></div><button class="newseq"><svg class="ic"><use href="#seq"/></svg>New sequence</button></div>
        </div>
        <div class="assoc">
          <h3>Sequence Association</h3>
          <div class="frame"><div class="frame-in">
            <table class="atable"><thead><tr><th>Navigated Link</th><th>Propagation Sequence</th></tr></thead>
              <tbody><tr><td>Default</td><td>Auto</td></tr><tr><td></td><td></td></tr></tbody></table>
            <div class="spin"><button aria-label="Up"><svg><use href="#up"/></svg></button><button aria-label="Down"><svg><use href="#down"/></svg></button></div>
          </div></div>
        </div>
      </div>
    </section>
  </div>
</main>

<menu class="ctx">
  <li><button class="hot"><svg class="ic"><use href="#cut"/></svg><span>Cut</span><kbd>Ctrl-X</kbd></button></li>
  <li><button><svg class="ic"><use href="#copy"/></svg><span>Copy</span><kbd>Ctrl-C</kbd></button></li>
  <li><button disabled><svg class="ic"><use href="#paste"/></svg><span>Paste</span><kbd>Ctrl-V</kbd></button></li>
  <li class="line"></li>
  <li><button><svg class="ic"><use href="#del"/></svg><span>Delete</span></button></li>
  <li><button><i class="ic"></i><span>Straighten Links</span></button></li>
  <li class="line"></li>
  <li><button><svg class="ic"><use href="#field"/></svg><span>Add Field</span></button></li>
  <li><button><svg class="ic"><use href="#select"/></svg><span>Add Selection Field</span></button></li>
  <li><button><svg class="ic"><use href="#mfield"/></svg><span>Add Multi Selection Field</span></button></li>
  <li><button><svg class="ic"><use href="#valid"/></svg><span>Add Validation Rule</span></button></li>
  <li class="line"></li>
  <li><button><svg class="ic"><use href="#dot"/></svg><span>Add Property</span></button></li>
  <li class="line"></li>
  <li><button><svg class="ic"><use href="#find"/></svg><span>Find references...</span></button></li>
  <li class="line"></li>
  <li><button><svg class="ic chain"><use href="#chain"/></svg><span>Add Link</span><kbd>Ctrl-L</kbd></button></li>
  <li class="line"></li>
  <li><button><svg class="ic"><use href="#wand"/></svg><span>Add Pattern</span></button></li>
  <li class="line"></li>
  <li><button><i class="ic"></i><span>Move Focus On</span></button></li>
  <li><button><svg class="ic"><use href="#expand"/></svg><span>Open All</span></button></li>
  <li><button><svg class="ic"><use href="#book"/></svg><span>Add Bookmark</span></button></li>
  <li><button><svg class="ic"><use href="#task"/></svg><span>Add Task</span></button></li>
  <li class="line"></li>
  <li><button><i class="ic"></i><span>Properties</span><kbd>F8</kbd></button></li>
</menu>

<div class="mark m-blue"></div>
<div class="mark m-red"></div>
<div class="mark m-green"></div>
</body>
</html>
```
FILE: styles.css
```css
:root {
  --bg: #efebdc;
  --line: #aca899;
  --soft: #cbc8b6;
  --blue: #4a90e0;
}
* { box-sizing: border-box; }
body {
  margin: 0;
  height: 100vh;
  display: flex;
  flex-direction: column;
  position: relative;
  overflow: hidden;
  background: var(--bg);
  font: 11px/16px "Liberation Sans", Arial, sans-serif;
  color: #000;
}
button {
  font: inherit;
  color: inherit;
  background: none;
  border: 0;
  padding: 0;
  margin: 0;
  display: flex;
  align-items: center;
  justify-content: center;
}
ul, menu { list-style: none; margin: 0; padding: 0; }
h1, h2, h3 { margin: 0; font-weight: normal; font-size: inherit; }
table { border-collapse: separate; border-spacing: 0; }
.defs { position: absolute; width: 0; height: 0; }
.ic { width: 16px; height: 16px; flex: none; display: block; }

/* window chrome */
.titlebar {
  flex: none;
  height: 23px;
  display: flex;
  align-items: center;
  gap: 4px;
  padding: 0 3px 3px 1px;
  background: linear-gradient(#1c6cf0 0, #0654e2 4px, #0455e6 12px, #0866fb 19px, #0340c0 23px);
  color: #fff;
}
.titlebar h1 {
  flex: 1;
  font: bold 13px/20px "Open Sans", "Noto Sans", sans-serif;
  text-shadow: 1px 1px 0 #0a2f8c;
  white-space: nowrap;
}
.winbtns { display: flex; gap: 2px; }
.winbtns button {
  width: 21px;
  height: 20px;
  border: 1px solid #fff;
  border-radius: 3px;
  background: linear-gradient(135deg, #5a8df5, #1f4fd6 60%, #1b46c4);
}
.winbtns .close { background: linear-gradient(135deg, #f0936f, #da3c18 60%, #b92c0c); }
.winbtns svg { width: 20px; height: 20px; flex: none; }
.menubar { flex: none; height: 19px; display: flex; gap: 12px; padding: 1px 0 0 4px; }

/* toolbars */
.toolbar { display: flex; align-items: center; flex: none; }
.main-tools { height: 34px; padding-left: 12px; border-top: 1px solid var(--soft); border-bottom: 1px solid var(--soft); }
.main-tools button { width: 28px; height: 28px; }
.sep { width: 10px; height: 18px; flex: none; background: linear-gradient(90deg, #fff 2px, #cdc9b8 2px) center / 3px 100% no-repeat; }

.work { flex: 1; min-height: 0; display: flex; gap: 5px; }

/* tabs */
.tabs { flex: none; display: flex; align-items: stretch; height: 22px; border-bottom: 1px solid #fff; }
.tab {
  gap: 3px;
  padding-left: 9px;
  justify-content: flex-start;
  border: 1px solid #d2cfbe;
  border-bottom: 0;
  border-radius: 3px 3px 0 0;
  background: linear-gradient(#f7f5ec, #ebe8da 50%, #d3d0c2);
  white-space: nowrap;
}
.tab.on { background: #fbfaf4; border-top: 3px solid #7da6d8; font-weight: bold; margin-bottom: -1px; }

/* left side */
.side { width: 255px; flex: none; display: flex; flex-direction: column; border-right: 1px solid var(--line); }
.side-tabs { height: 26px; padding-top: 1px; gap: 1px; }
.side-tabs .tab { width: 38px; }
.side-tabs .tab.on { width: 45px; padding-left: 12px; }
.tree-panel {
  flex: 1;
  min-height: 0;
  display: flex;
  border-left: 1px solid var(--soft);
  border-bottom: 1px solid var(--line);
  background: #fefefa;
  margin-right: 1px;
  padding-right: 2px;
  overflow: hidden;
}
.tree { flex: 1; overflow: hidden; }
.tree ul { padding-left: 20px; }
.tree li {
  background:
    linear-gradient(#b4c8f8, #b4c8f8) 8px 0 / 1px 100% no-repeat,
    linear-gradient(#b4c8f8, #b4c8f8) 8px 8px / 10px 1px no-repeat;
}
.tree li:last-child { background-size: 1px 8px, 10px 1px; }
.tree li.bare { background-size: 1px 100%, 0 0; }
.row { height: 16px; display: flex; align-items: center; padding-left: 4px; white-space: nowrap; }
.row .ic { margin: 0 3px 0 7px; }
.row.leaf { padding-left: 13px; }
.row span { line-height: 15px; padding-top: 1px; }
.row .picked { background: #ffcb2e; padding: 1px 3px 0 1px; margin-left: -1px; }
.tog {
  width: 9px;
  height: 9px;
  border: 1px solid #c6c3ae;
  background: linear-gradient(#8f8c78, #8f8c78) center / 5px 1px no-repeat, #fefefa;
}
.tog.plus {
  background: linear-gradient(#8f8c78, #8f8c78) center / 5px 1px no-repeat, linear-gradient(#8f8c78, #8f8c78) center / 1px 5px no-repeat, #fefefa;
}

/* scroll bars */
.sb { display: flex; flex-direction: column; width: 15px; flex: none; gap: 1px; background: linear-gradient(90deg, #f0ede0, #fffffa); }
.sb button { width: 15px; height: 15px; flex: none; border: 1px solid #73a7ea; border-radius: 2px; background: linear-gradient(#e6f0fe, #a9cbf8); box-shadow: inset 0 0 0 1px #fff; }
.sb svg { width: 13px; height: 13px; flex: none; }
.track { flex: 145; }
.thumb {
  flex: 303;
  border: 1px solid var(--blue);
  border-radius: 2px;
  box-shadow: inset 1px 0 0 #fff;
  background:
    repeating-linear-gradient(#4a86dc 0 1px, transparent 1px 2px) center / 7px 8px no-repeat,
    linear-gradient(90deg, #d6e7fd, #a5c8f6 50%, #6fa4e8);
}
.sb-props .track { flex: 9; }
.sb-props .thumb { flex: 103; }
.sb-v .track, .sb-h .track { flex: 92; }
.sb-v .thumb { flex: 334; }
.sb-h .thumb {
  flex: 586;
  box-shadow: inset 0 1px 0 #fff;
  background:
    repeating-linear-gradient(90deg, #4a86dc 0 1px, transparent 1px 2px) center / 8px 7px no-repeat,
    linear-gradient(#d6e7fd, #a5c8f6 50%, #6fa4e8);
}

/* property sheet */
.props { flex: none; height: 152px; padding: 5px 0 0; display: flex; gap: 2px; }
.props-body { flex: 1; border-top: 1px solid var(--line); overflow: hidden; }
.props-title { height: 12px; display: flex; align-items: flex-end; gap: 2px; padding-left: 2px; line-height: 16px; overflow: hidden; margin-bottom: 1px; padding-bottom: 1px; }
.ptable { width: 100%; table-layout: fixed; }
.ptable td, .ptable th { height: 16px; padding: 0 0 0 3px; line-height: 15px; border-right: 1px solid var(--soft); border-bottom: 1px solid var(--soft); text-align: left; white-space: nowrap; }
.ptable th { text-align: center; border-color: var(--line); height: 15px; line-height: 14px; }
.pn { width: 111px; }
.pv { width: 112px; }
.ptable .val { background: #fefefa; padding-left: 4px; }
.ptable .off td { color: #c6c3b4; }
.ptable td:last-child { padding: 0; }
.ptable .chk { padding: 0; text-align: center; }
.chk input { appearance: none; width: 13px; height: 13px; margin: 0 auto; border: 1px solid var(--line); background: #fff; display: block; }
.dots { width: 13px; height: 14px; border: 1px solid #d8d5c6; border-radius: 3px; background: #fbfaf4; line-height: 10px; }
.sb-props { padding: 2px 0 1px; }

/* editor */
.editor-col { flex: 1; min-width: 0; display: flex; flex-direction: column; }
.editor { flex: 1; min-height: 0; display: flex; flex-direction: column; padding: 3px 2px 0 2px; border: 1px solid var(--line); border-top: 0; }
.editor .tabs { height: 23px; }
.t-struct { width: 91px; }
.t-site { width: 107px; }
.t-new { width: 47px; padding-left: 7px; }
.unit-tools { height: 32px; padding-left: 3px; }
.unit-tools button { width: 24px; height: 23px; flex: none; }
.unit-tools .sep { width: 15px; }
.unit-tools .gap { width: 8px; flex: none; }
.unit-tools .sel { border: 1px solid #5a96dc; background: #d3e3f6; }
.chain { color: #4a403c; }
.ko { color: #e0402c; }
.ok { color: #6cb84a; }
.unit-tools .more { width: 16px; height: 22px; margin-left: auto; margin-right: 2px; border: 1px solid #d8d5c6; border-radius: 3px; background: #fff; }
.more svg { width: 16px; height: 24px; flex: none; }
.stage { flex: 1; min-height: 0; display: grid; grid-template: minmax(0, 1fr) 15px / 30px minmax(0, 1fr) 15px; gap: 1px; padding: 0 1px 3px 0; }
.vtools { display: flex; flex-direction: column; align-items: center; padding-top: 16px; }
.vtools button { width: 24px; height: 24px; flex: none; }
.vgap { height: 10px; flex: none; }
.canvas { position: relative; background: #f7fbff; border: 1px solid var(--blue); overflow: hidden; }
.sb-h { grid-column: 2; flex-direction: row; width: auto; background: linear-gradient(#f0ede0, #fffffa); }

/* diagram nodes */
.node { position: absolute; background: #fff; border: 1px solid #000; }
.node h2 { display: flex; align-items: center; height: 23px; padding: 0 2px; border-bottom: 1px solid #000; font-size: 12px; }
.node h2 span { flex: 1; white-space: nowrap; }
.n-home { left: 45px; top: 67px; width: 113px; height: 108px; }
.n-list { left: 227px; top: 61px; width: 118px; height: 120px; }
.n-album { left: 399px; top: 61px; width: 122px; height: 120px; }
.unit { width: 70px; height: 74px; margin: 3px 0 0 24px; border: 1px solid #8f0a3c; background: #fff5ea; color: #8f0a3c; display: flex; flex-direction: column; align-items: center; padding-top: 7px; }
.unit b { font-weight: normal; font-size: 12px; height: 21px; }
.unit small { font-size: 9px; line-height: 10px; color: #006400; margin-top: auto; padding-bottom: 3px; }
.unit.active { width: 77px; height: 64px; border: 2px solid #0000f0; margin: 2px 0 0 17px; }
.n-album .unit { width: 84px; margin-left: 18px; }
.u-entry { width: 30px; height: 30px; flex: none; }
.u-list { width: 28px; height: 26px; flex: none; }
.u-cyl { width: 24px; height: 24px; flex: none; margin-top: 2px; }
.links { position: absolute; left: 0; top: 0; width: 100%; height: 100%; }

/* bottom pane */
.bottom { flex: none; height: 122px; padding: 0 2px; display: flex; flex-direction: column; }
.panebtns { height: 12px; display: flex; justify-content: flex-end; gap: 7px; padding-right: 8px; align-items: flex-end; }
.panebtns svg { width: 14px; height: 12px; display: block; }
.bottom .tabs { margin-top: 2px; height: 24px; padding-top: 1px; border-top: 1px solid var(--line); gap: 1px; }
.t-prop { width: 140px; }
.t-hid { width: 169px; }
.t-search { width: 116px; }
.t-book { width: 104px; }
.t-task { width: 74px; }
.t-cons { width: 86px; }
.bottom-body { flex: 1; min-height: 0; display: flex; justify-content: space-between; border-right: 1px solid var(--line); padding: 7px 1px 10px 3px; }
.seqs { width: 197px; border-right: 1px solid var(--line); margin-left: -2px; }
.seqs h3 { padding-left: 38px; }
.seqbox { margin-right: 2px; padding: 5px 4px 5px 6px; border: 1px solid var(--line); border-left: 0; }
.seqlist { height: 10px; background: #e4e1d2; border: 1px solid #bdbaa9; margin-bottom: 5px; }
.newseq { width: 100%; height: 21px; gap: 3px; border: 1px solid #d8d5c6; border-radius: 3px; background: linear-gradient(#fff, #f3f1e6); }
.assoc { width: 280px; }
.assoc h3 { text-align: center; }
.frame { border: 1px solid var(--line); padding: 6px; box-shadow: inset 1px 1px 0 #fff, 1px 1px 0 #fff; }
.frame-in { display: flex; height: 37px; overflow: hidden; border: 1px solid var(--line); }
.atable { flex: 1; width: 100%; table-layout: fixed; }
.atable th { font-weight: normal; padding: 0; height: 15px; line-height: 15px; background: #f1ecdf; border-right: 1px solid var(--line); border-bottom: 1px solid var(--line); white-space: nowrap; }
.atable td { padding: 0 0 0 1px; height: 16px; line-height: 15px; background: #fefefa; border-right: 1px solid var(--soft); border-bottom: 1px solid var(--soft); }
.spin { width: 15px; flex: none; display: flex; flex-direction: column; padding: 15px 0 0 2px; }
.spin button { width: 13px; height: 10px; border: 1px solid #73a7ea; background: linear-gradient(#e6f0fe, #a9cbf8); }
.spin svg { width: 13px; height: 13px; flex: none; }

/* context menu */
.ctx { position: absolute; left: 364px; top: 285px; width: 195px; border: 1px solid #7a98b8; background: var(--bg); padding: 2px; }
.ctx button { width: 100%; height: 21px; padding: 0 7px 0 7px; gap: 3px; justify-content: flex-start; border: 1px solid transparent; }
.ctx span { flex: 1; text-align: left; white-space: nowrap; }
.ctx kbd { font: inherit; width: 29px; text-align: left; color: #7a9cc4; white-space: nowrap; }
.ctx .hot { border-color: var(--blue); background: linear-gradient(90deg, #fffdf4, #fddc88); }
.ctx .hot kbd { color: #000; }
.ctx button:disabled { color: #c6c3b4; }
.ctx button:disabled kbd { color: #c6c3b4; }
.line { height: 4px; margin: 0 -2px; background: linear-gradient(#c5c9c0, #c5c9c0) 0 1px / 100% 1px no-repeat, linear-gradient(#fff, #fff) 0 2px / 100% 1px no-repeat; }

/* hand-drawn highlights */
.mark { position: absolute; border: 2px solid; border-radius: 50%; pointer-events: none; }
.m-blue { left: 364px; top: 73px; width: 156px; height: 33px; border-color: #0000f0; }
.m-red { left: 18px; top: 322px; width: 93px; height: 25px; border-color: #f00000; }
.m-green { left: 94px; top: 630px; width: 116px; height: 39px; border-color: #00f000; }
```
